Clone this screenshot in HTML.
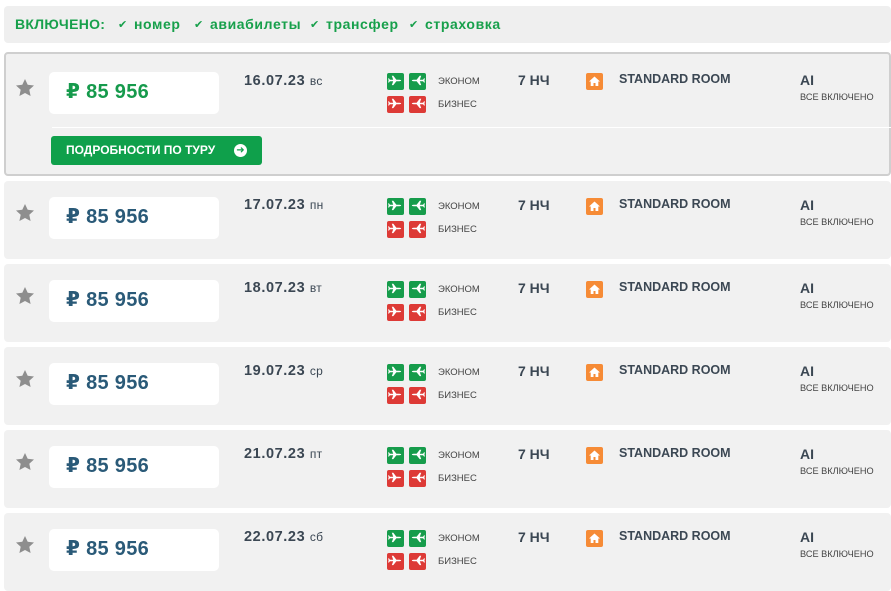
<!DOCTYPE html>
<html><head><meta charset="utf-8"><style>
*{margin:0;padding:0;box-sizing:border-box}
body{width:891px;height:588px;background:#fff;font-family:"Liberation Sans","DejaVu Sans",sans-serif;position:relative;overflow:hidden;color:#3b4753}
.hdr{position:absolute;left:4px;top:6px;width:887px;height:37px;background:#efefef;border-radius:4px;font-weight:bold;color:#17a04b;font-size:14px;line-height:37px;white-space:nowrap}
.hdr span{position:absolute;top:0;letter-spacing:.6px}
.hdr i{font-style:normal;font-size:11px;position:absolute;left:-16px;top:1px;letter-spacing:0}
.card{position:absolute;left:4px;width:887px;height:78px;background:#f1f1f1;border-radius:4px}
.card.first{border:2px solid #cfcfcf;height:124px;top:52px}
.in{position:absolute;left:0;top:0;width:100%}
.box{position:absolute;left:45px;top:0;width:170px;height:42px;background:#fff;border-radius:5px;font-weight:bold;font-size:20px;color:#2a5a78;line-height:40px;padding-left:17px;letter-spacing:.3px}
.star{position:absolute;left:11px;top:6px;width:20px;height:20px}
.date{position:absolute;left:240px;top:0;font-weight:bold;font-size:14.5px;line-height:16px;letter-spacing:.6px}
.date small{font-weight:normal;font-size:12px;letter-spacing:.3px}
.ic{position:absolute;width:17px;height:17px;border-radius:2px}
.g{background:#169c4b}.r{background:#dd3a36}
.lab{position:absolute;left:434px;font-size:9.5px;color:#444}
.n{position:absolute;left:514px;top:0;font-weight:bold;font-size:14px;line-height:16px}
.h{position:absolute;left:582px;top:1px;width:17px;height:17px;background:#f68b36;border-radius:2px}
.room{position:absolute;left:615px;top:0;font-weight:bold;font-size:12.5px;line-height:14px}
.ai{position:absolute;left:796px;top:0;font-weight:bold;font-size:14px;line-height:16px}
.all{position:absolute;left:796px;top:20px;font-size:9.2px;color:#444}
.sep{position:absolute;left:46px;top:73px;width:840px;height:1px;background:#fff}
.btn{position:absolute;left:45px;top:82px;width:211px;height:29px;background:#0fa04b;border-radius:3px;color:#fff;font-weight:bold;font-size:12px;line-height:29px;padding-left:15px}
.btn b{position:absolute;right:15px;top:8px;width:13px;height:13px;border-radius:50%;background:#fff;color:#0fa04b;font-size:10px;line-height:13px;text-align:center}
</style></head><body>
<svg width="0" height="0" style="position:absolute"><defs>
<symbol id="pl" viewBox="0 0 16 16"><path fill="#fff" d="M2 7.2h3.5L4 3h1.6l3.3 4.2H12c1.2 0 2 .4 2 .8s-.8.8-2 .8H8.9L5.6 13H4l1.5-4.2H2L1 10.2H0l.6-2.2L0 5.8h1z" transform="translate(1 0) scale(.88)"/></symbol>
<symbol id="st" viewBox="0 0 20 20"><path fill="#8e8e8e" d="M10 1l2.7 5.8 6.3.7-4.7 4.3 1.3 6.2L10 15l-5.6 3 1.3-6.2L1 7.5l6.3-.7z"/></symbol>
<symbol id="hs" viewBox="0 0 17 17"><path fill="#fff" d="M8.5 3.5L3 8.5h1.7V13h2.8v-3h2v3h2.8V8.5H14z"/></symbol>
</defs></svg>

<div class="hdr"><span style="left:11px;letter-spacing:.3px">ВКЛЮЧЕНО:</span><span style="left:130px"><i>✔</i>номер</span><span style="left:206px"><i>✔</i>авиабилеты</span><span style="left:322px"><i>✔</i>трансфер</span><span style="left:421px"><i>✔</i>страховка</span></div>

<div class="card first"><div class="in" style="top:18px;left:-2px">
<svg class="star"><use href="#st"/></svg>
<div class="box" style="color:#169a4c">₽ 85 956</div>
<div class="date" style="top:1px">16.07.23 <small>вс</small></div>
<div class="ic g" style="left:383px;top:1px"><svg width="17" height="17"><use href="#pl"/></svg></div>
<div class="ic g" style="left:405px;top:1px"><svg width="17" height="17" style="transform:scaleX(-1)"><use href="#pl"/></svg></div>
<div class="ic r" style="left:383px;top:24px"><svg width="17" height="17"><use href="#pl"/></svg></div>
<div class="ic r" style="left:405px;top:24px"><svg width="17" height="17" style="transform:scaleX(-1)"><use href="#pl"/></svg></div>
<div class="lab" style="top:4px">ЭКОНОМ</div><div class="lab" style="top:27px">БИЗНЕС</div>
<div class="n">7 НЧ</div>
<div class="h"><svg width="17" height="17"><use href="#hs"/></svg></div>
<div class="room">STANDARD ROOM</div>
<div class="ai">AI</div><div class="all">ВСЕ ВКЛЮЧЕНО</div>
</div>
<div class="sep"></div>
<div class="btn">ПОДРОБНОСТИ ПО ТУРУ<b>➜</b></div>
</div>

<div class="card" style="top:181px"><div class="in" style="top:16px">
<svg class="star"><use href="#st"/></svg><div class="box">₽ 85 956</div>
<div class="date">17.07.23 <small>пн</small></div>
<div class="ic g" style="left:383px;top:1px"><svg width="17" height="17"><use href="#pl"/></svg></div><div class="ic g" style="left:405px;top:1px"><svg width="17" height="17" style="transform:scaleX(-1)"><use href="#pl"/></svg></div><div class="ic r" style="left:383px;top:24px"><svg width="17" height="17"><use href="#pl"/></svg></div><div class="ic r" style="left:405px;top:24px"><svg width="17" height="17" style="transform:scaleX(-1)"><use href="#pl"/></svg></div>
<div class="lab" style="top:4px">ЭКОНОМ</div><div class="lab" style="top:27px">БИЗНЕС</div>
<div class="n">7 НЧ</div><div class="h"><svg width="17" height="17"><use href="#hs"/></svg></div><div class="room">STANDARD ROOM</div><div class="ai">AI</div><div class="all">ВСЕ ВКЛЮЧЕНО</div>
</div></div>

<div class="card" style="top:264px"><div class="in" style="top:16px">
<svg class="star"><use href="#st"/></svg><div class="box">₽ 85 956</div>
<div class="date">18.07.23 <small>вт</small></div>
<div class="ic g" style="left:383px;top:1px"><svg width="17" height="17"><use href="#pl"/></svg></div><div class="ic g" style="left:405px;top:1px"><svg width="17" height="17" style="transform:scaleX(-1)"><use href="#pl"/></svg></div><div class="ic r" style="left:383px;top:24px"><svg width="17" height="17"><use href="#pl"/></svg></div><div class="ic r" style="left:405px;top:24px"><svg width="17" height="17" style="transform:scaleX(-1)"><use href="#pl"/></svg></div>
<div class="lab" style="top:4px">ЭКОНОМ</div><div class="lab" style="top:27px">БИЗНЕС</div>
<div class="n">7 НЧ</div><div class="h"><svg width="17" height="17"><use href="#hs"/></svg></div><div class="room">STANDARD ROOM</div><div class="ai">AI</div><div class="all">ВСЕ ВКЛЮЧЕНО</div>
</div></div>

<div class="card" style="top:347px"><div class="in" style="top:16px">
<svg class="star"><use href="#st"/></svg><div class="box">₽ 85 956</div>
<div class="date">19.07.23 <small>ср</small></div>
<div class="ic g" style="left:383px;top:1px"><svg width="17" height="17"><use href="#pl"/></svg></div><div class="ic g" style="left:405px;top:1px"><svg width="17" height="17" style="transform:scaleX(-1)"><use href="#pl"/></svg></div><div class="ic r" style="left:383px;top:24px"><svg width="17" height="17"><use href="#pl"/></svg></div><div class="ic r" style="left:405px;top:24px"><svg width="17" height="17" style="transform:scaleX(-1)"><use href="#pl"/></svg></div>
<div class="lab" style="top:4px">ЭКОНОМ</div><div class="lab" style="top:27px">БИЗНЕС</div>
<div class="n">7 НЧ</div><div class="h"><svg width="17" height="17"><use href="#hs"/></svg></div><div class="room">STANDARD ROOM</div><div class="ai">AI</div><div class="all">ВСЕ ВКЛЮЧЕНО</div>
</div></div>

<div class="card" style="top:430px"><div class="in" style="top:16px">
<svg class="star"><use href="#st"/></svg><div class="box">₽ 85 956</div>
<div class="date">21.07.23 <small>пт</small></div>
<div class="ic g" style="left:383px;top:1px"><svg width="17" height="17"><use href="#pl"/></svg></div><div class="ic g" style="left:405px;top:1px"><svg width="17" height="17" style="transform:scaleX(-1)"><use href="#pl"/></svg></div><div class="ic r" style="left:383px;top:24px"><svg width="17" height="17"><use href="#pl"/></svg></div><div class="ic r" style="left:405px;top:24px"><svg width="17" height="17" style="transform:scaleX(-1)"><use href="#pl"/></svg></div>
<div class="lab" style="top:4px">ЭКОНОМ</div><div class="lab" style="top:27px">БИЗНЕС</div>
<div class="n">7 НЧ</div><div class="h"><svg width="17" height="17"><use href="#hs"/></svg></div><div class="room">STANDARD ROOM</div><div class="ai">AI</div><div class="all">ВСЕ ВКЛЮЧЕНО</div>
</div></div>

<div class="card" style="top:513px"><div class="in" style="top:16px">
<svg class="star"><use href="#st"/></svg><div class="box">₽ 85 956</div>
<div class="date">22.07.23 <small>сб</small></div>
<div class="ic g" style="left:383px;top:1px"><svg width="17" height="17"><use href="#pl"/></svg></div><div class="ic g" style="left:405px;top:1px"><svg width="17" height="17" style="transform:scaleX(-1)"><use href="#pl"/></svg></div><div class="ic r" style="left:383px;top:24px"><svg width="17" height="17"><use href="#pl"/></svg></div><div class="ic r" style="left:405px;top:24px"><svg width="17" height="17" style="transform:scaleX(-1)"><use href="#pl"/></svg></div>
<div class="lab" style="top:4px">ЭКОНОМ</div><div class="lab" style="top:27px">БИЗНЕС</div>
<div class="n">7 НЧ</div><div class="h"><svg width="17" height="17"><use href="#hs"/></svg></div><div class="room">STANDARD ROOM</div><div class="ai">AI</div><div class="all">ВСЕ ВКЛЮЧЕНО</div>
</div></div>
</body></html>
